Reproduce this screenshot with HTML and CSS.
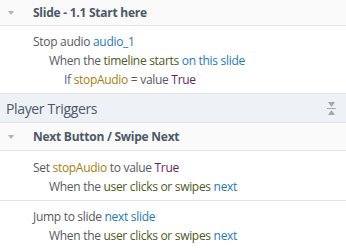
FILE: index.html
```html
<!DOCTYPE html>
<html lang="en">
<head>
  <meta charset="UTF-8" />
  <title>Triggers</title>
  <link rel="stylesheet" href="styles.css">
</head>
<body>
  <div class="panel">
    <div class="group-head first">
      <span class="caret"></span>
      <span class="group-title">Slide - 1.1 Start here</span>
    </div>
    <div class="trigger t1">
      <div class="line">Stop audio <span class="obj">audio_1</span></div>
      <div class="line ind1">When the <span class="evt">timeline starts</span> <span class="obj">on this slide</span></div>
      <div class="line ind2"><span class="cond">If</span> <span class="var">stopAudio</span> = value <span class="val">True</span></div>
    </div>

    <div class="section-head">
      <span>Player Triggers</span>
      <svg class="collapse" width="9" height="13" viewBox="0 0 9 13">
        <polygon points="1,0 8,0 4.5,5" fill="#a3a9b0"/>
        <rect x="0" y="6" width="9" height="1" fill="#a3a9b0"/>
        <polygon points="1,13 8,13 4.5,8" fill="#a3a9b0"/>
      </svg>
    </div>

    <div class="group-head">
      <span class="caret"></span>
      <span class="group-title">Next Button / Swipe Next</span>
    </div>
    <div class="trigger t2">
      <div class="line">Set <span class="var">stopAudio</span> to value <span class="val">True</span></div>
      <div class="line ind1">When the <span class="evt">user clicks or swipes</span> <span class="obj">next</span></div>
    </div>
    <div class="trigger t3">
      <div class="line">Jump to slide <span class="obj">next slide</span></div>
      <div class="line ind1">When the <span class="evt">user clicks or swipes</span> <span class="obj">next</span></div>
    </div>
  </div>
</body>
</html>
```

FILE: styles.css
```css
body {
  margin: 0;
  font-family: "Open Sans", "Noto Sans", sans-serif;
  font-size: 12px;
  letter-spacing: -0.3px;
  color: #555a60;
  background: #fff;
}
.panel {
  width: 346px;
}
.group-head {
  display: flex;
  align-items: center;
  height: 27px;
  background: #fafafa;
  border-bottom: 1px solid #e2e4e6;
}
.group-head.first {
  height: 25px;
}
.caret {
  width: 0;
  height: 0;
  margin: 0 19px 0 8px;
  border-left: 3px solid transparent;
  border-right: 3px solid transparent;
  border-top: 4px solid #b0b4b8;
}
.group-title {
  font-weight: bold;
  font-size: 12px;
  letter-spacing: -0.25px;
  color: #4b5966;
}
.trigger {
  border-bottom: 1px solid #e2e4e6;
  background: #fff;
}
.t1 { padding: 6px 0 4px; }
.t2 { padding: 7px 0 4px; }
.t3 { padding: 6px 0 4px; border-bottom: none; }
.line {
  height: 19px;
  line-height: 19px;
  padding-left: 33px;
  white-space: nowrap;
}
.line.ind1 { padding-left: 49px; }
.line.ind2 { padding-left: 64px; }
.obj { color: #1f7ab3; }
.evt { color: #4d5a22; }
.var { color: #a5800f; }
.val { color: #6b1d5c; }
.cond { color: #5b5b8c; }
.section-head {
  display: flex;
  align-items: center;
  justify-content: space-between;
  height: 28px;
  padding: 0 10px 0 6px;
  background: #eef2f6;
  border-bottom: 1px solid #dfe3e7;
  font-size: 14px;
  letter-spacing: -0.35px;
  color: #4b5966;
}
.collapse {
  display: block;
}
```
